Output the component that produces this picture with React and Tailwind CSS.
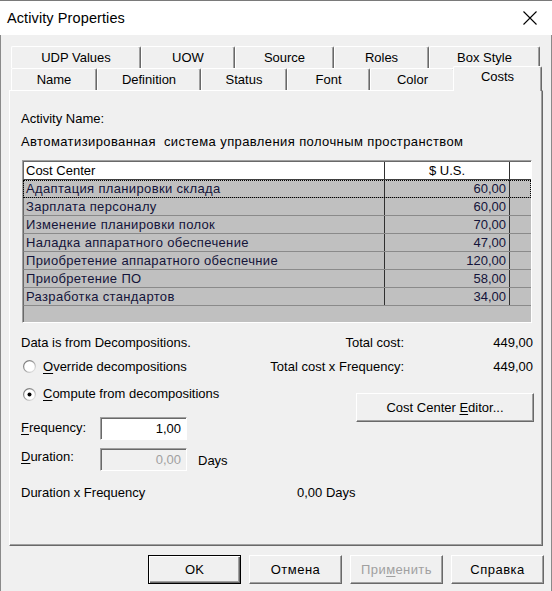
import React from "react";

const btnBase =
  "h-[29px] flex items-center justify-center bg-[#f0f0f0] border border-t-white border-l-white border-r-[#696969] border-b-[#696969] shadow-[inset_-1px_-1px_0_#a0a0a0]";

function Radio({ checked, id }) {
  return (
    <svg width="13" height="13" viewBox="0 0 13 13" className="shrink-0">
      <defs>
        <linearGradient id={id} x1="0" y1="0" x2="1" y2="1">
          <stop offset="0" stopColor="#6d6d6d" />
          <stop offset="0.5" stopColor="#a0a0a0" />
          <stop offset="1" stopColor="#f4f4f4" />
        </linearGradient>
      </defs>
      <circle cx="6.5" cy="6.5" r="5.9" fill="#fff" stroke={`url(#${id})`} strokeWidth="1.2" />
      {checked && <circle cx="6.5" cy="6.5" r="2" fill="#000" />}
    </svg>
  );
}

function Tab({ w, children }) {
  return (
    <div
      className={`${w} h-full flex items-center justify-center bg-[#f0f0f0] border-t border-l border-white border-r border-r-[#696969] shadow-[inset_-1px_0_0_#a0a0a0] rounded-t-[2px]`}
    >
      {children}
    </div>
  );
}

const rows = [
  ["Адаптация планировки склада", "60,00"],
  ["Зарплата персоналу", "60,00"],
  ["Изменение планировки полок", "70,00"],
  ["Наладка аппаратного обеспечение", "47,00"],
  ["Приобретение аппаратного обеспечние", "120,00"],
  ["Приобретение ПО", "58,00"],
  ["Разработка стандартов", "34,00"],
];

export default function App() {
  return (
    <div className="w-[552px] h-[591px] overflow-hidden bg-[#f0f0f0] border-t border-[#7a7a7a] flex flex-col font-['Liberation_Sans',Arial,sans-serif] text-[13px] leading-[16px] text-black">
      {/* Title bar */}
      <div className="h-[34px] bg-white flex items-center justify-between pl-[7px] pr-[15px] shrink-0">
        <span className="text-[14.5px] leading-[18px] tracking-[0.1px]">Activity Properties</span>
        <svg width="14" height="14" viewBox="0 0 14 14">
          <path d="M0.5 0.5 L13.5 13.5 M13.5 0.5 L0.5 13.5" stroke="#000" strokeWidth="1.1" />
        </svg>
      </div>

      <div className="flex-1 border-l border-r border-[#8a8a8a] pl-[8px] flex flex-col">
        {/* Tabs */}
        <div className="mt-[11px] flex flex-col">
          <div className="flex h-[22px] ml-[2px]">
            <Tab w="w-[130px]">UDP Values</Tab>
            <Tab w="w-[94px]">UOW</Tab>
            <Tab w="w-[99px]">Source</Tab>
            <Tab w="w-[95px]">Roles</Tab>
            <Tab w="w-[111px]">Box Style</Tab>
          </div>
          <div className="flex h-[22px] ml-[2px] items-end">
            <Tab w="w-[86px]">Name</Tab>
            <Tab w="w-[104px]">Definition</Tab>
            <Tab w="w-[86px]">Status</Tab>
            <Tab w="w-[83px]">Font</Tab>
            <Tab w="w-[85px]">Color</Tab>
            <div className="relative z-10 w-[89px] h-[25px] -ml-[2px] -mb-px shrink-0 flex items-center justify-center pb-[4px] bg-[#f0f0f0] border-t border-l border-white border-r border-r-[#696969] shadow-[inset_-1px_0_0_#a0a0a0] rounded-t-[2px]">
              Costs
            </div>
          </div>
        </div>

        {/* Panel */}
        <div className="w-[534px] h-[456px] border-t border-l border-white border-r border-b border-r-[#696969] border-b-[#696969] shadow-[inset_-1px_-1px_0_#a0a0a0] flex flex-col pl-[11px] pt-[20px]">
          <div>Activity Name:</div>
          <div className="mt-[7px] whitespace-pre tracking-[0.4px]">Автоматизированная  система управления полочным пространством</div>

          {/* Table */}
          <div className="mt-[10px] ml-px w-[510px] h-[163px] shrink-0 bg-[#c0c0c0] border border-t-[#a0a0a0] border-l-[#a0a0a0] border-r-white border-b-white flex flex-col text-[#14143a]">
            <div className="h-[19px] flex bg-white border-b border-[#404040] border-t border-t-[#696969] border-l border-l-[#696969]">
              <div className="w-[361px] border-r border-[#303030] pl-[2px] flex items-center text-black">Cost Center</div>
              <div className="w-[125px] border-r border-[#303030] flex items-center justify-center text-black">$ U.S.</div>
              <div className="flex-1" />
            </div>
            {rows.map(([name, val], i) => (
              <div
                key={i}
                className={`h-[18px] flex border-b border-[#8a8a8a] border-l border-l-[#696969] ${
                  i === 0 ? "outline outline-1 outline-dotted outline-black -outline-offset-1" : ""
                }`}
              >
                <div className="w-[361px] border-r border-[#303030] pl-[2px] flex items-center tracking-[0.35px]">{name}</div>
                <div className="w-[125px] border-r border-[#303030] pr-[3px] flex items-center justify-end">{val}</div>
                <div className="flex-1" />
              </div>
            ))}
            <div className="flex-1 border-l border-l-[#696969]" />
          </div>

          {/* Lower section */}
          <div className="mt-[12px] flex">
            <div className="w-[239px] flex flex-col">
              <div>Data is from Decompositions.</div>
              <div className="mt-[7px] h-[16px] flex items-center">
                <span className="ml-[2px]"><Radio id="r1" /></span>
                <span className="ml-[7px] mt-[1px]"><span className="underline underline-offset-2">O</span>verride decompositions</span>
              </div>
              <div className="mt-[12px] h-[16px] flex items-center">
                <span className="ml-[2px]"><Radio id="r2" checked /></span>
                <span className="ml-[7px]"><span className="underline underline-offset-2">C</span>ompute from decompositions</span>
              </div>
              <div className="mt-[15px] h-[23px] flex items-center">
                <span className="w-[79px] -mt-[2px]"><span className="underline underline-offset-2">F</span>requency:</span>
                <div className="w-[87px] h-[23px] bg-white border border-t-[#a0a0a0] border-l-[#a0a0a0] border-r-white border-b-white shadow-[inset_1px_1px_0_#696969] flex items-center justify-end pr-[5px]">
                  1,00
                </div>
              </div>
              <div className="mt-[8px] h-[23px] flex items-center">
                <span className="w-[79px] -mt-[5px]"><span className="underline underline-offset-2">D</span>uration:</span>
                <div className="w-[87px] h-[23px] bg-[#f0f0f0] border border-t-[#a0a0a0] border-l-[#a0a0a0] border-r-white border-b-white shadow-[inset_1px_1px_0_#696969] flex items-center justify-end pr-[5px] text-[#a0a0a0]">
                  0,00
                </div>
                <span className="ml-[11px] mt-[2px]">Days</span>
              </div>
            </div>
            <div className="w-[273px] flex flex-col">
              <div className="flex h-[16px]">
                <span className="w-[144px] text-right">Total cost:</span>
                <span className="flex-1 text-right">449,00</span>
              </div>
              <div className="mt-[8px] flex h-[16px]">
                <span className="w-[144px] text-right whitespace-nowrap">Total cost x Frequency:</span>
                <span className="flex-1 text-right">449,00</span>
              </div>
              <div className={`${btnBase} mt-[18px] w-[178px] ml-auto -mr-px`}>
                <span>Cost Center <span className="underline underline-offset-2">E</span>ditor...</span>
              </div>
            </div>
          </div>

          <div className="mt-[14px] flex">
            <span className="w-[276px]">Duration x Frequency</span>
            <span>0,00 Days</span>
          </div>
        </div>

        {/* Dialog buttons */}
        <div className="mt-[9px] flex justify-end gap-[8px] pr-[7px]">
          <div className="w-[93px] h-[29px] flex items-center justify-center bg-[#f0f0f0] border border-black shadow-[inset_1px_1px_0_#fff,inset_-1px_-1px_0_#696969,inset_-2px_-2px_0_#a0a0a0]">
            OK
          </div>
          <div className={`${btnBase} w-[93px] tracking-[0.5px]`}>Отмена</div>
          <div className={`${btnBase} w-[93px] text-[#a0a0a0] tracking-[0.4px]`}>
            <span>При<span className="underline underline-offset-2">м</span>енить</span>
          </div>
          <div className={`${btnBase} w-[93px] tracking-[0.5px]`}>Справка</div>
        </div>
      </div>
    </div>
  );
}
